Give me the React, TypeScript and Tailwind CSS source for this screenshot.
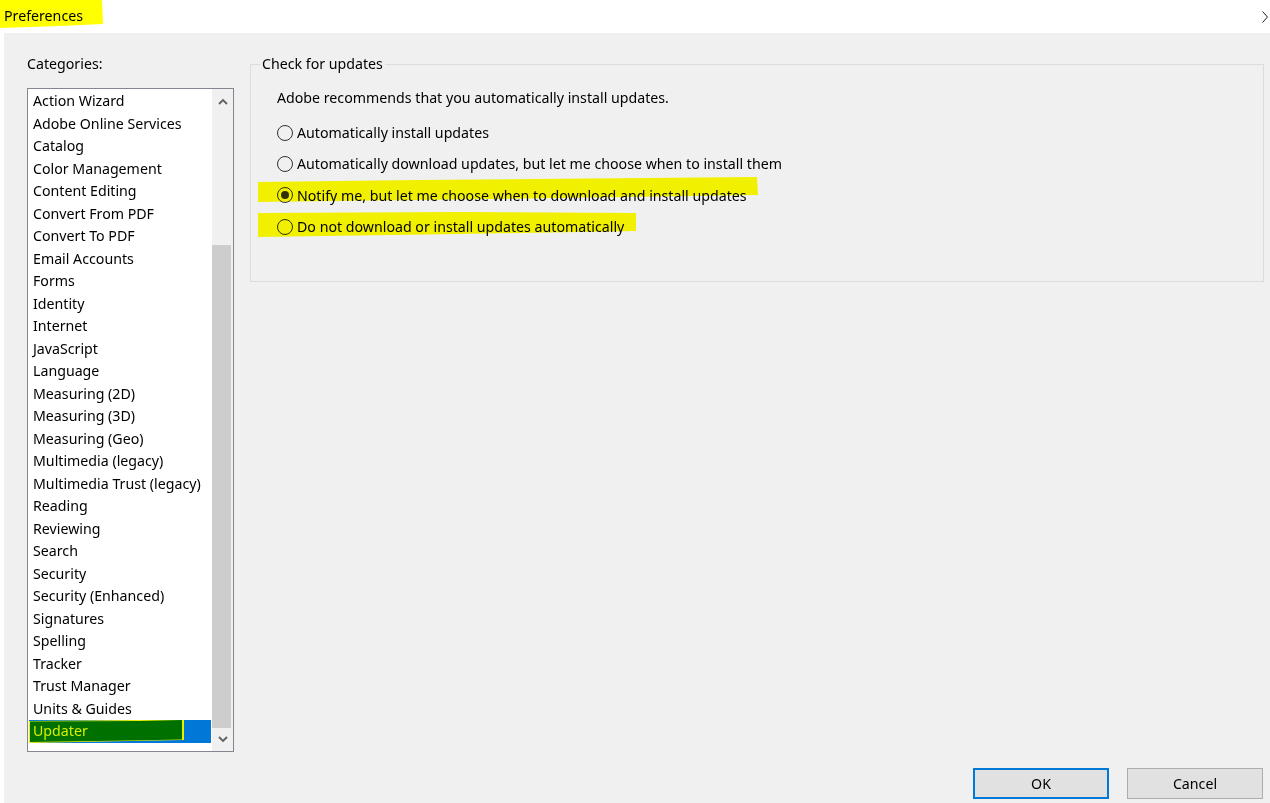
import React from "react";

const categories = [
  "Action Wizard",
  "Adobe Online Services",
  "Catalog",
  "Color Management",
  "Content Editing",
  "Convert From PDF",
  "Convert To PDF",
  "Email Accounts",
  "Forms",
  "Identity",
  "Internet",
  "JavaScript",
  "Language",
  "Measuring (2D)",
  "Measuring (3D)",
  "Measuring (Geo)",
  "Multimedia (legacy)",
  "Multimedia Trust (legacy)",
  "Reading",
  "Reviewing",
  "Search",
  "Security",
  "Security (Enhanced)",
  "Signatures",
  "Spelling",
  "Tracker",
  "Trust Manager",
  "Units & Guides",
];

function Radio({ checked }: { checked?: boolean }) {
  return (
    <span className="relative z-10 flex h-[16px] w-[16px] shrink-0 items-center justify-center rounded-full border border-[#333333] bg-white mix-blend-multiply">
      {checked && <span className="h-[8px] w-[8px] rounded-full bg-[#333333]" />}
    </span>
  );
}

function RadioRow({
  label,
  checked,
  highlight,
}: {
  label: string;
  checked?: boolean;
  highlight?: "a" | "b";
}) {
  return (
    <div className="relative flex h-[31.3px] items-center gap-[4px]">
      {highlight === "a" && (
        <svg
          className="pointer-events-none absolute left-[-19px] top-[-3px] z-20 mix-blend-multiply"
          width="502"
          height="28"
          viewBox="0 0 502 28"
        >
          <path d="M0 5 L160 3 L499 0 L500 18 L300 21 L0 25 Z" fill="#ffff00" />
        </svg>
      )}
      {highlight === "b" && (
        <svg
          className="pointer-events-none absolute left-[-19px] top-[-2px] z-20 mix-blend-multiply"
          width="380"
          height="30"
          viewBox="0 0 380 30"
        >
          <path d="M0 4 L200 3 L378 4 L378 22 L200 25 L0 28 Z" fill="#ffff00" />
        </svg>
      )}
      <Radio checked={checked} />
      <span className="relative z-10 text-[14.2px] text-black">{label}</span>
    </div>
  );
}

export default function App() {
  return (
    <div
      className="flex h-[803px] w-[1270px] flex-col overflow-hidden bg-white text-black"
      style={{ fontFamily: '"Noto Sans", "Open Sans", sans-serif' }}
    >
      {/* Title bar */}
      <div className="relative flex h-[33px] shrink-0 items-start justify-between">
        <div className="relative h-[29px] w-[104px]">
          <svg className="absolute left-0 top-0" width="104" height="29" viewBox="0 0 104 29">
            <path d="M0 0 L102 0 L103 24 L60 26 L0 28 Z" fill="#ffff00" />
          </svg>
          <span className="relative block pl-[4px] pt-[6px] text-[14.2px] leading-[20px]">
            Preferences
          </span>
        </div>
        <svg className="mr-[2px] mt-[11px]" width="6" height="12" viewBox="0 0 6 12">
          <path d="M0.5 0.5 L5.5 6 L0.5 11.5" fill="none" stroke="#222" strokeWidth="1" />
        </svg>
      </div>

      {/* Dialog body */}
      <div className="ml-[4px] flex flex-1 bg-[#f0f0f0]">
        {/* Left column */}
        <div className="ml-[23px] flex w-[207px] flex-col">
          <div className="mt-[20px] h-[22px] text-[14.2px] leading-[22px]">Categories:</div>
          <div className="mt-[13px] flex h-[664px] border border-[#828790] bg-white">
            <div className="flex flex-1 flex-col pl-[1px] pt-[1px]">
              {categories.map((c) => (
                <div key={c} className="flex h-[22.5px] items-center pl-[4px] text-[14.2px] leading-none">
                  {c}
                </div>
              ))}
              <div className="relative flex h-[22.5px] w-[182px] items-center bg-[#0078d7] pl-[4px]">
                <svg className="absolute left-0 top-0" width="156" height="23" viewBox="0 0 156 23">
                  <path d="M0 1 L110 0 L155 -1 L155 20 L100 21 L0 23 Z" fill="#eef000" />
                  <path d="M1 1.5 L110 1 L153 0 L153 19.5 L100 20.5 L1 22 Z" fill="#007000" />
                </svg>
                <span className="relative text-[14.2px] leading-none text-[#d6ef00]">Updater</span>
              </div>
            </div>
            {/* Scrollbar */}
            <div className="flex w-[21px] flex-col bg-[#f0f0f0]">
              <div className="flex h-[24px] items-center justify-center">
                <svg width="10" height="7" viewBox="0 0 10 7">
                  <path d="M1 6 L5 2 L9 6" fill="none" stroke="#606060" strokeWidth="1.8" />
                </svg>
              </div>
              <div className="mt-[132px] h-[483px] w-[19px] bg-[#cdcdcd]" />
              <div className="flex flex-1 items-center justify-center">
                <svg width="10" height="7" viewBox="0 0 10 7">
                  <path d="M1 1 L5 5 L9 1" fill="none" stroke="#606060" strokeWidth="1.8" />
                </svg>
              </div>
            </div>
          </div>
        </div>

        {/* Right column */}
        <div className="ml-[16px] flex w-[1014px] flex-col">
          <fieldset className="mt-[21px] h-[228px] border border-[#dcdcdc]">
            <legend className="ml-[9px] px-[2px] text-[14.2px] leading-[20px]">Check for updates</legend>
            <div className="pl-[26px]">
              <div className="mt-[10px] flex h-[28px] items-center text-[14.2px]">
                Adobe recommends that you automatically install updates.
              </div>
              <div className="mt-[5px] flex flex-col">
                <RadioRow label="Automatically install updates" />
                <RadioRow label="Automatically download updates, but let me choose when to install them" />
                <RadioRow
                  label="Notify me, but let me choose when to download and install updates"
                  checked
                  highlight="a"
                />
                <RadioRow label="Do not download or install updates automatically" highlight="b" />
              </div>
            </div>
          </fieldset>
          <div className="flex-1" />
          <div className="mb-[4px] mr-[1px] flex justify-end gap-[18px]">
            <button className="flex h-[31px] w-[136px] items-center justify-center border-2 border-[#0078d7] bg-[#e1e1e1] text-[14.2px]">
              OK
            </button>
            <button className="flex h-[31px] w-[136px] items-center justify-center border border-[#adadad] bg-[#e1e1e1] text-[14.2px]">
              Cancel
            </button>
          </div>
        </div>
      </div>
    </div>
  );
}
